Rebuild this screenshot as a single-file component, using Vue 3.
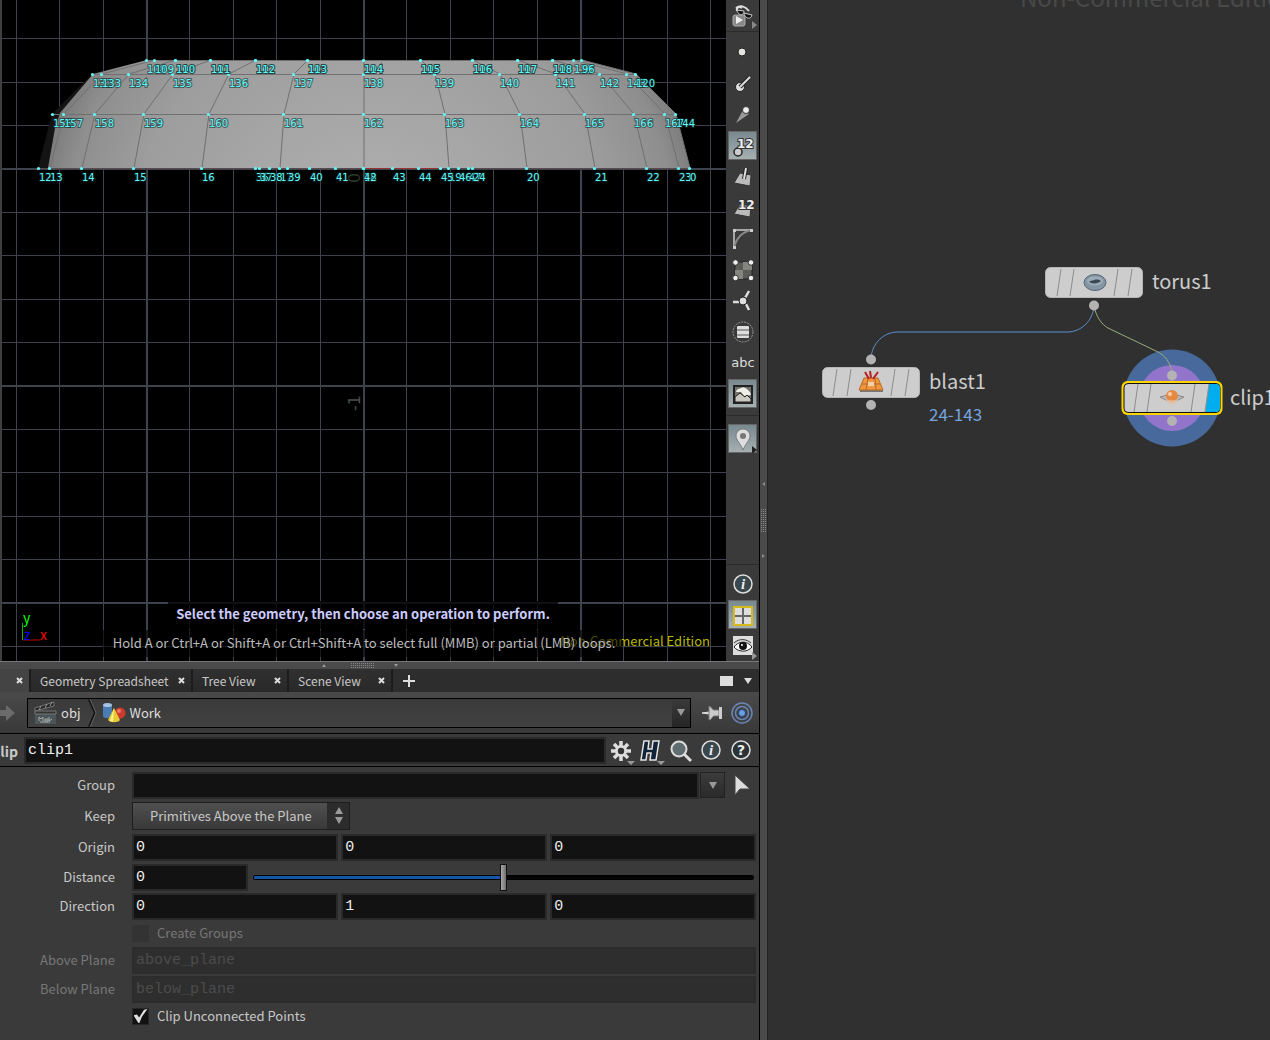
<script setup>
import { ref } from 'vue'

const verticals = Array.from({ length: 17 }, (_, i) => {
  const major = i % 5 === 3
  return { at: Math.round(16.7 + i * 43.4) - (major ? 0 : 0.5), major }
})
const horizontals = Array.from({ length: 15 }, (_, i) => {
  const major = i % 5 === 3
  return { at: Math.round(38.2 + i * 43.4) + (major ? 1 : 0.5), major }
})

const rows = [
  { y: 60, xs: [147, 155, 176, 211, 256, 308, 364, 421, 473, 518, 553, 574, 582], labels: [108, 109, 110, 111, 112, 113, 114, 115, 116, 117, 118, 119, 96] },
  { y: 74, xs: [93, 102, 129, 173, 229, 294, 364, 435, 500, 556, 600, 627, 636], labels: [132, 133, 134, 135, 136, 137, 138, 139, 140, 141, 142, 143, 120] },
  { y: 114, xs: [53, 64, 95, 144, 209, 284, 364, 445, 520, 585, 634, 665, 676], labels: [156, 157, 158, 159, 160, 161, 162, 163, 164, 165, 166, 167, 144] },
  { y: 168, xs: [39, 50, 82, 134, 202, 280, 364, 449, 527, 595, 647, 679, 690], labels: [12, 13, 14, 15, 16, 17, 18, 19, 20, 21, 22, 23, 0] }
]
const inner = { y: 168, xs: [256, 260, 270, 288, 310, 336, 364, 393, 419, 441, 459, 469, 473], labels: [36, 37, 38, 39, 40, 41, 42, 43, 44, 45, 46, 47, 24] }
const hidden = { y: 60, xs: [176, 211, 256, 308, 364, 421, 473, 518, 553], labels: [100, 101, 102, 103, 104, 105, 106, 107, 108] }

const points = [hidden, ...rows, inner].flatMap(r => r.xs.map((x, i) => ({ x, y: r.y, label: r.labels[i] })))
const columns = rows[0].xs.map((_, i) => rows.map(r => `${r.xs[i]},${r.y}`).join(' '))

const tabs = [
  { name: 'Geometry Spreadsheet', size: 'wide' },
  { name: 'Tree View', size: 'narrow' },
  { name: 'Scene View', size: 'medium' }
]

const nodeName = ref('clip1')
const group = ref('')
const keep = ref('Primitives Above the Plane')
const origin = ref(['0', '0', '0'])
const distance = ref('0')
const slider = ref(0)
const direction = ref(['0', '1', '0'])
const clipPoints = ref(true)
const axes = ['X', 'Y', 'Z']
</script>

<template>
  <main class="app">
    <section class="left">
      <div class="viewer">
        <svg class="scene" aria-label="Front viewport">
          <defs>
            <radialGradient id="shell" gradientUnits="userSpaceOnUse" cx="370" cy="240" r="340">
              <stop offset="0" stop-color="#b2b2b2" />
              <stop offset=".7" stop-color="#9d9d9d" />
              <stop offset=".9" stop-color="#8e8e8e" />
              <stop offset="1" stop-color="#777" />
            </radialGradient>
          </defs>
          <rect width="100%" height="100%" fill="#000" />
          <g stroke="#3d424d">
            <line v-for="l in verticals" :key="'v' + l.at" :x1="l.at" :x2="l.at" y1="0" y2="100%" :stroke-width="l.major ? 2 : 1" />
            <line v-for="l in horizontals" :key="'h' + l.at" x1="0" x2="100%" :y1="l.at" :y2="l.at" :stroke-width="l.major ? 2 : 1" />
          </g>
          <text class="axis-tick" transform="translate(360 183) rotate(-90)" fill="#2b382b">0</text>
          <text class="axis-tick" transform="translate(360 411) rotate(-90)" fill="#4a514a">-1</text>
          <text class="axis-tick" transform="translate(360 628) rotate(-90)" fill="#101a10">-2</text>
          <path d="M147 60 92 74 52 114 38 168H50L64 114Z" fill="#141414" />
          <path d="M147 60H582L636 74 676 114 690 168H48L55 128 60 113 93 74Z" fill="url(#shell)" />
          <g fill="none" stroke="#707070">
            <polyline v-for="(c, i) in columns.slice(1)" :key="i" :points="c" />
            <path d="M147 60.500H582M93 74.500H636M53 114.500H676" />
          </g>
          <path d="M39 168.500H690" stroke="#5a4c4c" />
          <path d="M364 168.500H441" stroke="#933" />
          <path d="M366 87.500h5" stroke="red" stroke-dasharray="2 1" />
          <g fill="#5ffafa">
            <circle v-for="(p, i) in points" :key="i" :cx="p.x - .5" :cy="p.y + .5" r="1.600" />
          </g>
          <g class="point-label">
            <text v-for="(p, i) in points" :key="i" :x="p.x" :y="p.y + 13">{{ p.label }}</text>
          </g>
          <g fill="none" stroke-width="1">
            <path d="M22.500 623V640" stroke="#0b0" />
            <path d="M23 640H40" stroke="#b00" />
          </g>
          <g class="gizmo">
            <text x="23" y="623" fill="#0f0">y</text>
            <text x="24" y="640" fill="#00f">z</text>
            <text x="40" y="640" fill="#f00">x</text>
          </g>
          <text class="edition" x="710" y="646" text-anchor="end">Non-Commercial Edition</text>
          <rect x="168" y="601" width="390" height="28" fill="#000" opacity=".75" />
          <rect x="103" y="630" width="519" height="27" fill="#000" opacity=".6" />
          <text class="prompt" x="363" y="619" text-anchor="middle">Select the geometry, then choose an operation to perform.</text>
          <text class="hint" x="364" y="648" text-anchor="middle">Hold A or Ctrl+A or Shift+A or Ctrl+Shift+A to select full (MMB) or partial (LMB) loops.</text>
        </svg>

        <nav class="tools" aria-label="Display options">
          <button class="tool" aria-label="View options">
            <svg viewBox="0 0 28 28"><rect x="4" y="13" width="12" height="11" rx="2" fill="#888" stroke="#aaa" /><path d="m7 14 7 4-7 4Z" fill="#eee" /><path d="M7 6c4-3 9-2 13 3M8 9C7 5 10 4 13 6" fill="none" stroke="#ddd" stroke-width="2" /><path d="m8 8 7 1c0 5-6 5-7-1ZM15 11l8 2c-1 5-7 4-8-2Z" fill="#111" stroke="#ccc" /><path d="m23 19 5 4-5 4Z" fill="#888" /></svg>
          </button>
          <hr>
          <button class="tool" aria-label="Points"><svg viewBox="0 0 28 28"><circle cx="13" cy="13" r="4" fill="#e4e4de" stroke="#222" /></svg></button>
          <button class="tool" aria-label="Point normals"><svg viewBox="0 0 28 28"><circle cx="11" cy="17" r="4.500" fill="#ddd" stroke="#222" /><path d="m11 17 9-9" stroke="#222" stroke-width="4" /><path d="m11 17 10-10" stroke="#ddd" stroke-width="2" /></svg></button>
          <button class="tool" aria-label="Point trails"><svg viewBox="0 0 28 28"><path d="m7 22 7-13 6 4Z" fill="#999" /><circle cx="17" cy="9" r="3.500" fill="#eee" stroke="#333" /></svg></button>
          <button class="tool on" aria-label="Point numbers"><svg viewBox="0 0 28 28"><circle cx="9" cy="20" r="4" fill="#ccc" stroke="#222" stroke-width="1.500" /><text class="badge" x="8" y="16">12</text></svg></button>
          <button class="tool" aria-label="Primitive normals"><svg viewBox="0 0 28 28"><path d="m5 20 6-10 11 2-1 11Z" fill="#bbb" stroke="#333" /><path d="m15 16 2-11" stroke="#222" stroke-width="4" /><path d="m15 16 2-11" stroke="#ddd" stroke-width="2" /></svg></button>
          <button class="tool" aria-label="Primitive numbers"><svg viewBox="0 0 28 28"><path d="m5 20 6-10 11 2-1 11Z" fill="#bbb" stroke="#333" /><text class="badge" x="9" y="15">12</text></svg></button>
          <button class="tool" aria-label="Hulls"><svg viewBox="0 0 28 28"><path d="M5 22V5h18" fill="none" stroke="#ccc" stroke-width="1.500" /><path d="M5 23C7 14 12 7 23 5" fill="none" stroke="#888" stroke-width="2" /><path d="M4 4h3v3H4ZM21 4h3v3h-3ZM4 21h3v3H4Z" fill="#ccc" /></svg></button>
          <button class="tool" aria-label="UV layout"><svg viewBox="0 0 28 28"><path d="M6 6h17v17H6Z" fill="#5b5b57" stroke="#222" /><path d="M14 6h9v8h-9ZM6 14h8v9H6Z" fill="#85857f" /><g fill="#eee" stroke="#333"><circle cx="6.500" cy="6.500" r="2.800" /><circle cx="22" cy="6.500" r="2.800" /><circle cx="6.500" cy="22" r="2.800" /><circle cx="22" cy="22" r="2.800" /></g></svg></button>
          <button class="tool" aria-label="Vertices"><svg viewBox="0 0 28 28"><path d="M10 15H4M16 11l4-7M17 17l3 6" stroke="#ddd" stroke-width="2.500" /><circle cx="14" cy="14" r="4" fill="#ddd" stroke="#222" /></svg></button>
          <button class="tool" aria-label="Selection mask"><svg viewBox="0 0 28 28"><circle cx="14" cy="14" r="10" fill="none" stroke="#999" stroke-dasharray="2 1" /><rect x="8" y="8" width="12" height="12" rx="1" fill="#ddd" /><path d="M8 12h12M8 17h12" stroke="#999" stroke-width="2" /></svg></button>
          <button class="tool abc">abc</button>
          <button class="tool on" aria-label="Background image"><svg viewBox="0 0 28 28"><rect x="5" y="6" width="18" height="17" fill="#73736c" stroke="#222" stroke-width="2" /><path d="M7 12c1-4 4-3 5-4 3-2 6 1 9 4l1 3-7 1-3-4Z" fill="#eeeee8" /><path d="M6 17 11 13l5 4 2-2 4 4v3H6Z" fill="#c9c9c2" stroke="#222" /></svg></button>
          <hr class="low">
          <button class="tool on" aria-label="Markers"><svg viewBox="0 0 28 28"><path d="M14 4c-4 0-7 3-7 7 0 4 4 7 7 14 3-7 7-10 7-14 0-4-3-7-7-7Z" fill="#ddd" stroke="#777" /><circle cx="14" cy="11" r="3" fill="#777" /><path d="m23 21 5 4-5 4Z" fill="#222" /></svg></button>
          <span class="grow"></span>
          <hr class="last">
          <button class="tool" aria-label="Information"><svg viewBox="0 0 28 28"><circle cx="14" cy="14" r="9" fill="#3a474c" stroke="#ddd" stroke-width="1.500" /><text class="info" x="14" y="19">i</text></svg></button>
          <button class="tool on" aria-label="Layout"><svg viewBox="0 0 28 28"><rect x="5" y="6" width="18" height="18" fill="#ddd" stroke="#d6b91a" stroke-width="2" /><path d="M14 7v16M6 15h16" stroke="#666" stroke-width="2" /></svg></button>
          <button class="tool" aria-label="Visibility"><svg viewBox="0 0 28 28"><rect x="4" y="4" width="20" height="19" fill="#ddd" /><path d="M5 15c4-6 13-7 18 0-5 6-14 5-18 0Z" fill="#fff" stroke="#222" /><path d="M5 11c5-5 13-4 17 0" fill="none" stroke="#333" /><circle cx="14" cy="14" r="4" fill="#111" /><circle cx="13" cy="13" r="1" fill="#fff" /><path d="m23 20 5 4-5 4Z" fill="#999" /></svg></button>
        </nav>
      </div>

      <div class="hsplit"><svg viewBox="0 0 80 7"><path d="m2 5 2-3 2 3ZM74 2l2 3 2-3Z" fill="#999" /><path d="M31 1.500h24M31 3.500h24M31 5.500h24" stroke="#888" stroke-dasharray="1 1" /></svg></div>

      <header class="tabbar">
        <div class="tab current"><button class="close" aria-label="Close tab"><svg viewBox="0 0 7 7"><path d="m1 1 5 5M6 1 1 6" /></svg></button></div>
        <div v-for="t in tabs" :key="t.name" class="tab" :class="t.size">
          <button class="title">{{ t.name }}</button>
          <button class="close" :aria-label="'Close ' + t.name"><svg viewBox="0 0 7 7"><path d="m1 1 5 5M6 1 1 6" /></svg></button>
        </div>
        <button class="add" aria-label="New tab"><svg viewBox="0 0 12 12"><path d="M6 0v12M0 6h12" stroke="#ddd" stroke-width="2" /></svg></button>
        <span class="grow"></span>
        <button class="pane-btn" aria-label="Maximize pane"><svg width="13" height="10"><rect width="13" height="10" fill="#ddd" /></svg></button>
        <button class="pane-btn" aria-label="Pane menu"><svg width="8" height="6"><path d="M0 0h8L4 6Z" fill="#ddd" /></svg></button>
      </header>

      <div class="pathbar">
        <button class="forward" aria-label="Forward"><svg viewBox="0 0 16 18"><path d="M0 6h6V1l9 8-9 8v-5H0Z" fill="#6b6b6b" /></svg></button>
        <div class="path">
          <a href="#obj" class="crumb">
            <svg width="24" height="24" viewBox="0 0 24 24"><path d="M2 11h21v12H2Z" fill="#4b565a" /><path d="M2 7 21 1v4L2 10Z" fill="#222" stroke="#777" /><path d="m6 9 2-4M12 7l2-4M17 5l2-4" stroke="#999" /><path d="M2 10h21v3H2Z" fill="#333" stroke="#777" /><path d="M6 20v-4l2 2 2-2v4M12 18h3v2h-3ZM16 16v4l3-2M7 21h10" stroke="#aaa" fill="none" /></svg>
            obj
          </a>
          <svg class="chevron" width="9" height="28" viewBox="0 0 9 28"><path d="m1 0 6 14-6 14" fill="none" stroke="#111" stroke-width="2" /><path d="m2 0 6 14-6 14" fill="none" stroke="#666" /></svg>
          <a href="#work" class="crumb">
            <svg width="24" height="22" viewBox="0 0 24 22"><path d="M1 3v11c0 3 9 3 9 0V3Z" fill="#4b7db5" /><ellipse cx="5.500" cy="3" rx="4.500" ry="2" fill="#a5c4e4" /><circle cx="18" cy="11" r="5.500" fill="#cc3a2c" /><circle cx="17" cy="9" r="2" fill="#ea7a68" /><path d="m12 6-6 12c2 3 10 3 12 0Z" fill="#e8c833" /><path d="m12 6-4 13 3 1Z" fill="#fff08a" /></svg>
            Work
          </a>
          <button class="path-menu" aria-label="Path menu"><svg width="8" height="7"><path d="M0 0h8L4 7Z" fill="#999" /></svg></button>
        </div>
        <button class="icon" aria-label="Pin"><svg viewBox="0 0 30 30"><path d="m5 15 7-1v2Z" fill="#eee" stroke="#ddd" /><path d="M12 8c3 1 3 4 5 4h5v6h-5c-2 0-2 4-5 4Z" fill="#ccc" stroke="#777" /><path d="M23.500 9v12" stroke="#ccc" stroke-width="3" /></svg></button>
        <button class="icon" aria-label="Link"><svg viewBox="0 0 30 30"><g fill="none" stroke="#6885b5"><circle cx="15" cy="15" r="10" stroke-width="1.500" /><circle cx="15" cy="15" r="6.500" stroke-width="1.500" /></g><circle cx="15" cy="15" r="3.500" fill="#6aa0e6" stroke="#27466f" /></svg></button>
      </div>

      <div class="namebar">
        <label for="node-name" class="type">Clip</label>
        <input id="node-name" v-model="nodeName" class="field">
        <button class="icon" aria-label="Settings"><svg viewBox="0 0 30 30"><g stroke="#ddd" stroke-width="3.500"><path d="M15 5v20M5 15h20M8 8l14 14M22 8 8 22" /></g><circle cx="15" cy="15" r="6" fill="#ddd" /><circle cx="15" cy="15" r="3.200" fill="#333" /><path d="M21 25h8l-4 4Z" fill="#999" /></svg></button>
        <button class="icon" aria-label="Houdini help"><svg viewBox="0 0 30 30"><path d="M8 5h5l-1 8h4l1-8h6l-3 19h-6l1-7h-4l-1 7H5Z" fill="#102238" stroke="#e4e4e4" stroke-width="1.500" /><path d="M21 25h8l-4 4Z" fill="#999" /></svg></button>
        <button class="icon" aria-label="Search"><svg viewBox="0 0 30 30"><circle cx="13" cy="13" r="7.500" fill="#5f6c70" stroke="#ddd" stroke-width="2" /><path d="m18 18 7 7" stroke="#ddd" stroke-width="3" /></svg></button>
        <button class="icon" aria-label="Information"><svg viewBox="0 0 30 30"><circle cx="15" cy="14" r="9" fill="#3a474c" stroke="#ddd" stroke-width="1.500" /><text class="info" x="15" y="19">i</text></svg></button>
        <button class="icon" aria-label="Help"><svg viewBox="0 0 30 30"><circle cx="15" cy="14" r="9" fill="#2b3336" stroke="#ddd" stroke-width="1.500" /><text class="help" x="15" y="19">?</text></svg></button>
      </div>

      <form class="params" @submit.prevent>
        <label for="group">Group</label>
        <div class="row tight">
          <input id="group" v-model="group" class="field">
          <button type="button" class="menu" aria-label="Group menu"><svg width="8" height="7"><path d="M0 0h8L4 7Z" fill="#999" /></svg></button>
          <button type="button" class="icon" aria-label="Select group"><svg viewBox="0 0 30 30"><path d="M9 5v20l5-6h10Z" fill="#ddd" stroke="#444" /></svg></button>
        </div>

        <label for="keep">Keep</label>
        <div class="row tall">
          <span class="combo">
            <select id="keep" v-model="keep">
              <option>Primitives Above the Plane</option>
              <option>Primitives Below the Plane</option>
              <option>All Primitives</option>
            </select>
            <svg width="8" height="18" viewBox="0 0 8 18"><path d="M4 0 8 7H0ZM4 17l4-7H0Z" fill="#999" /></svg>
          </span>
        </div>

        <label for="origin0">Origin</label>
        <div class="row">
          <input v-for="(a, i) in axes" :id="'origin' + i" :key="a" v-model="origin[i]" class="field" :aria-label="'Origin ' + a">
        </div>

        <label for="distance">Distance</label>
        <div class="row">
          <input id="distance" v-model="distance" class="field short">
          <input v-model="slider" type="range" min="-1" max="1" step="0.01" aria-label="Distance">
        </div>

        <label for="direction0">Direction</label>
        <div class="row snug">
          <input v-for="(a, i) in axes" :id="'direction' + i" :key="a" v-model="direction[i]" class="field" :aria-label="'Direction ' + a">
        </div>

        <span></span>
        <label class="tick check-row off"><input type="checkbox" disabled>Create Groups</label>

        <label for="above" class="off">Above Plane</label>
        <div class="row snug"><input id="above" class="field" value="above_plane" disabled></div>

        <label for="below" class="off">Below Plane</label>
        <div class="row"><input id="below" class="field" value="below_plane" disabled></div>

        <span></span>
        <label class="tick"><input v-model="clipPoints" type="checkbox">Clip Unconnected Points</label>
      </form>
    </section>

    <div class="vsplit"><svg viewBox="0 0 7 80"><path d="m5 2-3 2 3 2ZM2 74l3 2-3 2Z" fill="#888" /><path d="M1.500 29v24M3.500 29v24M5.500 29v24" stroke="#888" stroke-dasharray="1 1" /></svg></div>

    <section class="network">
      <svg class="graph" aria-label="Network editor">
        <text class="watermark" x="252" y="7">Non-Commercial Edition</text>
        <circle cx="404" cy="398" r="48.500" fill="#47699b" />
        <circle cx="404" cy="398" r="33" fill="#9275ca" />
        <path d="M326 306c-1 14-12 26-27 26H130c-15 0-26 12-27 26" fill="none" stroke="#5b8fce" />
        <path d="M326 306c2 10 7 18 14 22l48 23c9 4 15 12 16 22" fill="none" stroke="#98ad77" />
        <g fill="#b3b3b3">
          <circle cx="326" cy="305.500" r="5" /><circle cx="103" cy="359.500" r="5" /><circle cx="103" cy="405" r="5" />
          <circle cx="404" cy="375.500" r="5" /><circle cx="404" cy="421" r="5" />
        </g>
        <g>
          <rect x="277.500" y="267.500" width="97" height="30" rx="5" fill="#cdcdcd" stroke="#b5b5b5" />
          <path d="m293 269-4 27M306 269l-4 27M350 269l-4 27M364 269l-4 27" stroke="#8c8c8c" />
          <ellipse cx="327" cy="282.500" rx="11" ry="8" fill="#8495a3" stroke="#566674" />
          <ellipse cx="327" cy="281" rx="8" ry="4.500" fill="#9dacb8" />
          <path d="M321 282c2-2 4-1 5-2 3-1 6 0 7 1-3 3-9 3-12 1Z" fill="#394753" />
          <text class="node-name" x="384" y="289">torus1</text>
        </g>
        <g>
          <rect x="54.500" y="367.500" width="97" height="30" rx="5" fill="#cdcdcd" stroke="#b5b5b5" />
          <path d="m69 369-4 27M83 369l-4 27M127 369l-4 27M141 369l-4 27" stroke="#8c8c8c" />
          <path d="M92 390h23v2H92Z" fill="#777" />
          <path d="M96 378h14l5 12H91Z" fill="#f0963c" stroke="#b96a27" />
          <path d="M94 384h18M100 378l-2 12M107 378l1 12" stroke="#b96a27" />
          <path d="m97 372 4 7M102 371l1 7M110 372l-5 7" stroke="#b62020" stroke-width="2" />
          <path d="M100 382h6v4h-6Z" fill="#eed0b0" />
          <text class="node-name" x="161" y="389">blast1</text>
          <text class="node-info" x="161" y="421">24-143</text>
        </g>
        <g>
          <rect x="353.500" y="381" width="101" height="34" rx="6" fill="#ffd500" />
          <rect x="356" y="383.500" width="96" height="29" rx="4" fill="#cdcdcd" stroke="#111" />
          <path d="M441 384h7q4 0 4 4v20q0 4-4 4h-11Z" fill="#00aef0" />
          <path d="m370 384-4 28M383 384l-4 28M427 384l-4 28M441 384l-4 28" stroke="#8c8c8c" />
          <path d="m392 397 12-3 12 3-12 6Z" fill="#bbb" stroke="#888" />
          <circle cx="404" cy="396" r="6" fill="#e48a45" /><circle cx="402" cy="394" r="2" fill="#ffd0a6" />
          <path d="M398 399q6 3 12 0-1 5-6 5t-6-5Z" fill="#e3c0a4" />
          <text class="node-name" x="462" y="405">clip1</text>
        </g>
      </svg>
    </section>
  </main>
</template>

<style>
body { margin: 0; background: #3a3a3a; }
</style>

<style scoped>
.app {
  display: flex;
  min-height: 100vh;
  overflow: hidden;
  background: #3a3a3a;
  color: #c8c8c8;
  font: 13px/20px "Noto Sans CJK SC", "Noto Sans", sans-serif;
}
.app * { box-sizing: border-box; }
button { display: block; margin: 0; padding: 0; border: 0; background: none; color: inherit; font: inherit; }
svg { display: block; }
.grow { flex: 1; }
.left { flex: 760 1 0; min-width: 0; display: flex; flex-direction: column; border-right: 1px solid #000; }
.viewer { display: flex; height: 661px; border-left: 2px solid #3f3f3f; }
.scene { flex: 1; min-width: 0; height: 100%; margin-left: -2px; clip-path: inset(0 0 0 2px); }
.point-label { font: 10px "DejaVu Sans", sans-serif; fill: #5ffafa; stroke: #102c2c; stroke-width: 2px; stroke-opacity: .6; paint-order: stroke; }
.axis-tick { font: 16px "DejaVu Sans", sans-serif; }
.gizmo { font-size: 14px; }
.edition { fill: #b9b900; }
.prompt { fill: #ccccff; font-weight: 700; }
.hint { fill: #bcbcbc; }

.tools { display: flex; flex-direction: column; width: 33px; background: #3a3a3a; }
.tool { display: grid; place-items: center; flex: 0 0 29px; width: 29px; height: 29px; margin: 1px 2px; border: 1px solid transparent; }
.tool svg { width: 28px; height: 28px; margin: -1px; }
.tool.on { border-color: #666; background: linear-gradient(#788990, #a5b0b1); }
.tool.abc { font: 13px/20px "DejaVu Sans", sans-serif; color: #ddd; }
.tools hr { flex: none; width: 100%; height: 1px; margin: 0 0 5px; border: 0; background: #2b2b2b; }
.tools hr.low { margin: 6px 0 7px; }
.tools hr.last { margin: 0 0 3px; }
.badge { font: 700 12px "DejaVu Sans", sans-serif; fill: #eee; stroke: #333; stroke-width: 2px; paint-order: stroke; }
.info { font: italic 700 15px "Liberation Serif", serif; fill: #eee; text-anchor: middle; }
.help { font: 700 14px "DejaVu Sans", sans-serif; fill: #eee; text-anchor: middle; }

.hsplit { display: flex; justify-content: center; height: 8px; border-top: 1px solid #777; background: #4a4a4a; }
.hsplit svg { width: 80px; height: 7px; margin-right: 40px; }
.tabbar { display: flex; height: 23px; background: #2d2d2d; }
.tab { display: flex; align-items: center; justify-content: space-between; padding: 0 6px 0 9px; border-right: 2px solid #1c1c1c; background: linear-gradient(#303030, #292929); }
.tab.current { width: 31px; justify-content: flex-end; background: #444; }
.tab.wide { width: 162px; }
.tab.narrow { width: 96px; }
.tab.medium { width: 104px; }
.title { font-size: 12px; white-space: nowrap; }
.close svg { width: 7px; height: 7px; stroke: #ddd; stroke-width: 2px; }
.add { margin-left: 10px; }
.add svg { width: 12px; height: 12px; }
.pane-btn { display: grid; place-items: center; width: 22px; }
.pathbar { display: flex; align-items: center; height: 42px; padding-right: 2px; background: linear-gradient(#4a4a4a, #393939); border-bottom: 1px solid #000; }
.forward { width: 27px; }
.forward svg { width: 16px; height: 18px; }
.path { display: flex; align-items: center; flex: 1; height: 30px; margin-right: 6px; border: 1px solid #000; background: linear-gradient(#3a3a3a, #414141); }
.crumb { display: flex; align-items: center; gap: 4px; padding: 0 7px 0 5px; color: #ddd; text-decoration: none; }
.path-menu { display: grid; place-items: center; width: 18px; height: 100%; margin-left: auto; background: linear-gradient(#3a3a3a, #262626); }
.icon { flex: none; width: 30px; height: 30px; }
.icon svg { width: 30px; height: 30px; }
.namebar { display: flex; align-items: center; height: 33px; padding: 1px 3px 0 0; border-bottom: 1px solid #000; }
.type { display: flex; justify-content: flex-end; flex: none; width: 24px; padding-right: 6px; font-size: 14px; font-weight: 700; }
.field {
  flex: 1; min-width: 0; height: 27px; padding: 0 2px; border: 2px solid #2a2a2a; border-radius: 0;
  background: #121212; color: #eee; font: 15px/23px "Liberation Mono", monospace;
}
.field:disabled { background: #2e2e2e; border-color: #2c2c2c; color: #4c4c4c; }
.field.short { flex: 0 0 116px; }

.params { display: grid; grid-template-columns: 115px 1fr; column-gap: 17px; align-items: center; padding: 3px 3px 12px 0; }
.params > label:not(.tick) { text-align: right; }
.params > label.off { color: #777; }
.row { display: flex; align-items: center; gap: 3px; height: 30px; }
.row.tight { gap: 1px; }
.row.tall { height: 32px; }
.row.snug { height: 28px; }
.menu { display: grid; place-items: center; width: 25px; height: 26px; border: 1px solid #222; background: linear-gradient(#3c3c3c, #2a2a2a); }
.combo { display: grid; width: 218px; height: 28px; }
.combo select {
  grid-area: 1 / 1; appearance: none; padding: 0 0 0 17px; border: 1px solid #1e1e1e; border-radius: 0;
  background: linear-gradient(90deg, transparent 194px, #2c2c2c 194px), linear-gradient(#505050, #393939);
  color: inherit; font: inherit;
}
.combo svg { grid-area: 1 / 1; place-self: center end; margin-right: 7px; pointer-events: none; }
input[type="range"] { flex: 1; min-width: 0; height: 27px; margin: 0 2px; appearance: none; background: none; }
input[type="range"]::-webkit-slider-runnable-track { height: 5px; border: 1px solid #000; border-radius: 2px; background: linear-gradient(90deg, #1557a6 50%, #050505 50%); }
input[type="range"]::-webkit-slider-thumb { appearance: none; width: 7px; height: 27px; margin-top: -12px; border: 1px solid #111; background: linear-gradient(90deg, #aaa, #6e6e6e); }
.tick { display: flex; align-items: center; gap: 8px; height: 24px; }
.tick.check-row { height: 26px; }
.tick.off { color: #777; }
.tick input { display: grid; place-items: center; appearance: none; width: 17px; height: 17px; margin: 0; border: 1px solid #262626; background: #121212; }
.tick input:disabled { background: #333; border-color: #333; }
.tick input:checked::before { content: ""; width: 14px; height: 14px; background: #ddd; clip-path: polygon(0 45%, 25% 40%, 40% 60%, 75% 5%, 100% 0, 60% 55%, 42% 100%, 35% 100%); }

.vsplit { display: flex; align-items: center; flex: 0 0 8px; background: #4a4a4a; border-right: 1px solid #222; }
.vsplit svg { width: 7px; height: 80px; }
.network { flex: 502 1 0; min-width: 0; display: flex; background: #303030; }
.graph { width: 100%; }
.watermark { fill: #494949; font-size: 24px; }
.node-name { fill: #cdcdcd; font-size: 20px; }
.node-info { fill: #75a3de; font-size: 17px; }
</style>
